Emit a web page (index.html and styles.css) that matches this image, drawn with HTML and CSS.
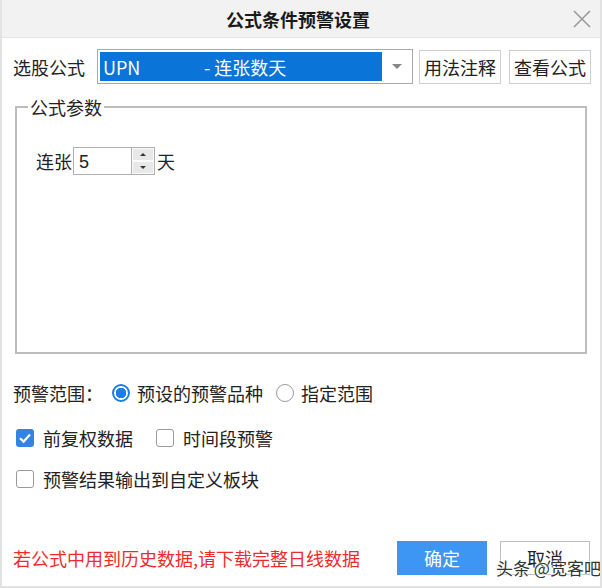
FILE: index.html
```html
<!DOCTYPE html>
<html lang="zh-CN">
<head>
    <meta charset="UTF-8">
    <title>公式条件预警设置</title>
    <link rel="stylesheet" href="styles.css">
</head>
<body>
<div class="dialog">
    <div class="title-bar">
        <span class="title">公式条件预警设置</span>
        <span class="close">
            <svg width="18" height="18" viewBox="0 0 18 18">
                <path d="M1 1 L17 17 M17 1 L1 17" stroke="#9a9a9a" stroke-width="1.6" fill="none"/>
            </svg>
        </span>
    </div>

    <div class="content">
        <div class="formula-row">
            <span class="label">选股公式</span>
            <div class="combo">
                <div class="combo-value">
                    <span class="code">UPN</span>
                    <span class="name">- 连张数天</span>
                </div>
                <span class="combo-arrow"></span>
            </div>
            <button class="btn">用法注释</button>
            <button class="btn">查看公式</button>
        </div>

        <fieldset class="params">
            <legend>公式参数</legend>
            <div class="param-row">
                <span>连张</span>
                <div class="spin">
                    <span class="spin-value">5</span>
                    <div class="spin-buttons">
                        <span class="spin-up"></span>
                        <span class="spin-down"></span>
                    </div>
                </div>
                <span>天</span>
            </div>
        </fieldset>

        <div class="option-row range-row">
            <span>预警范围：</span>
            <span class="radio checked"></span>
            <span>预设的预警品种</span>
            <span class="radio"></span>
            <span>指定范围</span>
        </div>

        <div class="option-row check-row">
            <span class="check checked">
                <svg width="18" height="18" viewBox="0 0 18 18">
                    <path d="M4 9.2 L7.6 12.6 L14 5.6" stroke="#fff" stroke-width="2.2" fill="none"/>
                </svg>
            </span>
            <span class="check-label">前复权数据</span>
            <span class="check"></span>
            <span>时间段预警</span>
        </div>

        <div class="option-row output-row">
            <span class="check"></span>
            <span>预警结果输出到自定义板块</span>
        </div>

        <div class="footer">
            <span class="warning">若公式中用到历史数据,请下载完整日线数据</span>
            <button class="btn-ok">确定</button>
            <button class="btn-cancel">取消</button>
        </div>
    </div>

    <div class="watermark">头条 @宽客吧</div>
</div>
</body>
</html>
```

FILE: styles.css
```css
body {
    margin: 0;
    font-family: "Noto Sans CJK SC", "Liberation Sans", sans-serif;
    color: #222;
    background-color: #fff;
}

.dialog {
    position: relative;
    width: 602px;
    height: 588px;
    box-sizing: border-box;
    border-left: 2px solid #e2e2e2;
    border-right: 2px solid #e2e2e2;
    border-bottom: 2px solid #e2e2e2;
    background-color: #fff;
    overflow: hidden;
}

.title-bar {
    height: 37px;
    display: flex;
    align-items: center;
    justify-content: center;
    background-color: #f2f2f2;
    border-bottom: 1px solid #e4e4e4;
    position: relative;
}

.title {
    font-size: 18px;
    font-weight: bold;
    color: #1a1a1a;
    margin-left: -6px;
}

.close {
    position: absolute;
    right: 9px;
    top: 9px;
    width: 18px;
    height: 18px;
}

.content {
    padding: 11px 9px 0 11px;
    font-size: 18px;
}

.formula-row {
    display: flex;
    align-items: center;
    height: 35px;
}

.label {
    width: 84px;
}

.combo {
    width: 316px;
    height: 35px;
    box-sizing: border-box;
    border: 1px solid #a9a9a9;
    display: flex;
    align-items: center;
    padding: 2px;
}

.combo-value {
    flex: 1;
    height: 100%;
    background-color: #0a74d8;
    color: #fff;
    display: flex;
    align-items: center;
    font-size: 18px;
    padding-left: 3px;
}

.code {
    width: 101px;
}

.combo-arrow {
    width: 0;
    height: 0;
    margin: 0 8px 0 10px;
    border-left: 5px solid transparent;
    border-right: 5px solid transparent;
    border-top: 5px solid #888;
}

.btn {
    height: 34px;
    margin-left: 6px;
    padding: 0 4px;
    background-color: #fff;
    border: 1px solid #cfcfcf;
    font-family: inherit;
    font-size: 18px;
    color: #222;
}

.btn + .btn {
    margin-left: 8px;
}

.params {
    margin: 10px 0 0 2px;
    width: 572px;
    height: 260px;
    box-sizing: border-box;
    border: 2px solid #bdbdbd;
    padding: 27px 0 0 19px;
}

.params legend {
    padding: 0 2px;
    margin-left: -8px;
    font-size: 18px;
}

.param-row {
    display: flex;
    align-items: center;
}

.spin {
    display: flex;
    margin-left: 1px;
    margin-right: 2px;
    height: 28px;
}

.spin-value {
    width: 58px;
    box-sizing: border-box;
    border: 1px solid #b0b0b0;
    border-right: none;
    padding-left: 5px;
    font-family: "Liberation Sans", sans-serif;
    font-size: 18px;
    line-height: 28px;
}

.spin-buttons {
    width: 24px;
    display: flex;
    flex-direction: column;
    border: 1px solid #b0b0b0;
    box-sizing: border-box;
}

.spin-up,
.spin-down {
    flex: 1;
    background-color: #e8e8e8;
    border: 1px solid #fafafa;
    display: flex;
    align-items: center;
    justify-content: center;
}

.spin-up::after {
    content: "";
    border-left: 3px solid transparent;
    border-right: 3px solid transparent;
    border-bottom: 3px solid #333;
}

.spin-down::after {
    content: "";
    border-left: 3px solid transparent;
    border-right: 3px solid transparent;
    border-top: 3px solid #333;
}

.option-row {
    display: flex;
    align-items: center;
    height: 26px;
}

.range-row {
    margin-top: 26px;
}

.check-row {
    margin-top: 19px;
}

.output-row {
    margin-top: 15px;
}

.radio {
    width: 18px;
    height: 18px;
    box-sizing: border-box;
    border: 1px solid #9a9a9a;
    border-radius: 50%;
    margin: 0 7px 0 13px;
    background-color: #fff;
}

.radio.checked {
    margin-left: 9px;
    border: 2px solid #1d7ee6;
    background: radial-gradient(circle, #1d7ee6 0 5px, #fff 5.5px);
}

.check {
    width: 18px;
    height: 18px;
    box-sizing: border-box;
    border: 1px solid #9a9a9a;
    border-radius: 3px;
    margin: 0 9px 0 3px;
    display: flex;
}

.check.checked {
    border: none;
    background-color: #3184e4;
}

.check-label {
    margin-right: 20px;
}

.footer {
    display: flex;
    align-items: center;
    margin-top: 49px;
    height: 34px;
}

.warning {
    color: #ee2b2b;
    font-size: 18px;
    width: 384px;
    white-space: nowrap;
}

.btn-ok {
    width: 90px;
    height: 34px;
    background-color: #3d96f4;
    color: #fff;
    border: none;
    font-family: inherit;
    font-size: 18px;
}

.btn-cancel {
    width: 90px;
    height: 34px;
    margin-left: 13px;
    background-color: #fff;
    color: #222;
    border: 1px solid #bdbdbd;
    font-family: inherit;
    font-size: 18px;
}

.watermark {
    position: absolute;
    left: 494px;
    top: 555px;
    font-size: 17px;
    white-space: nowrap;
    color: #333;
    text-shadow: 0 0 2px #fff, 0 0 2px #fff, 0 0 3px #fff;
}
```
